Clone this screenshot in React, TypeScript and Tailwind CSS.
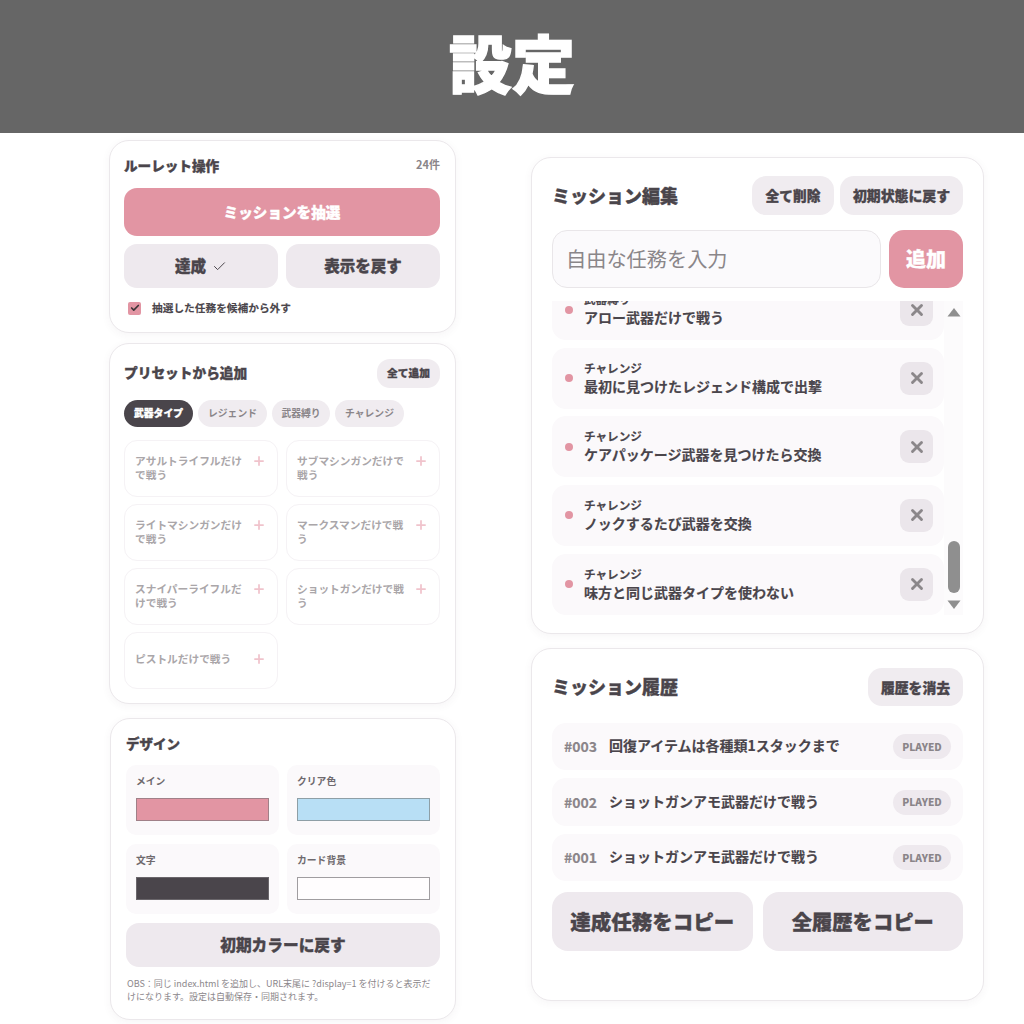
import React from "react";
import { X, Plus, Check } from "lucide-react";

const font = { fontFamily: '"Noto Sans CJK JP", "Noto Sans", sans-serif' };

const heavy = "font-black [-webkit-text-stroke:0.35px_currentColor]";
const medium = "font-bold [-webkit-text-stroke:0.15px_currentColor]";

const presets = [
  "アサルトライフルだけで戦う",
  "サブマシンガンだけで戦う",
  "ライトマシンガンだけで戦う",
  "マークスマンだけで戦う",
  "スナイパーライフルだけで戦う",
  "ショットガンだけで戦う",
  "ピストルだけで戦う",
];

const missions = [
  ["武器縛り", "アロー武器だけで戦う"],
  ["チャレンジ", "最初に見つけたレジェンド構成で出撃"],
  ["チャレンジ", "ケアパッケージ武器を見つけたら交換"],
  ["チャレンジ", "ノックするたび武器を交換"],
  ["チャレンジ", "味方と同じ武器タイプを使わない"],
];

const history = [
  ["#003", "回復アイテムは各種類1スタックまで", "h-[47px]"],
  ["#002", "ショットガンアモ武器だけで戦う", "h-[48px]"],
  ["#001", "ショットガンアモ武器だけで戦う", "h-[47px]"],
];

const colors = [
  ["メイン", "bg-[#e295a3]", "border-[#a08088]"],
  ["クリア色", "bg-[#b8dff5]", "border-[#8e9fa6]"],
  ["文字", "bg-[#4a454b]", "border-[#6a666b]"],
  ["カード背景", "bg-[#fffdfe]", "border-[#a09da0]"],
];

const cardClass =
  "rounded-[20px] border border-[#ebe8eb] bg-white shadow-[0_2px_8px_rgba(70,60,70,0.05)]";

export default function App() {
  return (
    <div style={font} className="h-[1024px] w-[1024px] overflow-hidden bg-white text-[#4a454b]">
      <header className="flex h-[133px] items-center justify-center bg-[#666666] pb-[12px]">
        <h1 className="text-[63px] font-black leading-none text-white [-webkit-text-stroke:1.4px_white]">設定</h1>
      </header>

      <main className="flex items-start">
        {/* Left column */}
        <div className="ml-[109px] mt-[7px] flex w-[347px] flex-col">
          <section className={`${cardClass} h-[193px] pl-[14px] pr-[15px]`}>
            <div className="flex h-[47px] items-center justify-between pt-[2px]">
              <h2 className={`text-[13.6px] ${heavy}`}>ルーレット操作</h2>
              <span className="-mt-[3px] text-[11px] font-bold text-[#8a8589]">24件</span>
            </div>
            <button className={`flex h-[48px] w-full items-center justify-center rounded-[13px] bg-[#e295a3] text-[14.6px] text-white ${heavy}`}>
              ミッションを抽選
            </button>
            <div className="mt-[8px] grid grid-cols-2 gap-[8px]">
              <button className={`flex h-[44px] items-center justify-center gap-[6px] rounded-[13px] bg-[#eee9ee] text-[15.5px] ${heavy}`}>
                達成 <Check size={15} strokeWidth={1.6} />
              </button>
              <button className={`h-[44px] rounded-[13px] bg-[#eee9ee] text-[15.5px] ${heavy}`}>表示を戻す</button>
            </div>
            <label className={`mt-[12px] flex items-center gap-[11px] pl-[4px] text-[10.7px] ${medium}`}>
              <span className="flex h-[13px] w-[13px] items-center justify-center rounded-[2px] bg-[#e295a3] text-[#3a3538]">
                <Check size={10} strokeWidth={4} />
              </span>
              抽選した任務を候補から外す
            </label>
          </section>

          <section className={`${cardClass} mt-[10px] h-[361px] pl-[14px] pr-[15px]`}>
            <div className="flex h-[44px] items-center justify-between pt-[14px]">
              <h2 className={`-mt-[2px] text-[13.7px] ${heavy}`}>プリセットから追加</h2>
              <button className={`flex h-[29px] w-[63px] items-center justify-center rounded-[13px] bg-[#f0ecf0] text-[10.7px] ${heavy}`}>
                全て追加
              </button>
            </div>
            <div className="mt-[12px] flex gap-[5px]">
              <span className={`flex h-[27px] w-[69px] items-center justify-center rounded-full bg-[#4a454b] text-[9.8px] text-white ${heavy}`}>
                武器タイプ
              </span>
              <span className="flex h-[27px] w-[69px] items-center justify-center rounded-full bg-[#f0ecf0] text-[9.8px] font-bold text-[#8a8589]">
                レジェンド
              </span>
              <span className="flex h-[27px] w-[58px] items-center justify-center rounded-full bg-[#f0ecf0] text-[9.8px] font-bold text-[#8a8589]">
                武器縛り
              </span>
              <span className="flex h-[27px] w-[69px] items-center justify-center rounded-full bg-[#f0ecf0] text-[9.8px] font-bold text-[#8a8589]">
                チャレンジ
              </span>
            </div>
            <div className="mt-[13px] grid grid-cols-2 gap-x-[8px] gap-y-[7px]">
              {presets.map((t, i) => (
                <div
                  key={t}
                  className={`flex h-[57px] ${i === 6 ? "pt-[19px]" : "pt-[13px]"} items-start justify-between rounded-[13px] border border-[#f5f2f5] bg-white pl-[10px] pr-[11px]`}
                >
                  <span className="w-[108px] text-[10.7px] font-bold leading-[14px] text-[#aaa6a9]">{t}</span>
                  <Plus size={14} strokeWidth={3} className="text-[#f0c3cc]" />
                </div>
              ))}
            </div>
          </section>

          <section className={`${cardClass} ml-px mt-[14px] h-[302px] px-[15px]`}>
            <h2 className={`pt-[15px] text-[13.5px] leading-[18px] ${heavy}`}>デザイン</h2>
            <div className="mt-[13px] grid grid-cols-2 gap-x-[8px] gap-y-[9px]">
              {colors.map(([label, bg, border]) => (
                <div key={label} className="h-[70px] rounded-[10px] bg-[#fbf9fb] px-[10px] pt-[9px]">
                  <div className="text-[9.8px] font-bold leading-[14px] text-[#6f6a6e]">{label}</div>
                  <div className={`mt-[10px] h-[23px] border-[1.5px] ${bg} ${border}`} />
                </div>
              ))}
            </div>
            <button className={`mt-[9px] h-[44px] w-full rounded-[13px] bg-[#eee9ee] text-[15.7px] ${heavy}`}>
              初期カラーに戻す
            </button>
            <p className="mt-[10px] pl-[1px] pr-[8px] text-[9px] leading-[13px] text-[#8c878b]">
              OBS：同じ index.html を追加し、URL末尾に ?display=1 を付けると表示だけになります。設定は自動保存・同期されます。
            </p>
          </section>
        </div>

        {/* Right column */}
        <div className="ml-[75px] mt-[24px] flex w-[453px] flex-col">
          <section className={`${cardClass} h-[477px] px-[20px] pt-[18px]`}>
            <div className="flex h-[39px] items-center justify-between">
              <h2 className={`text-[18px] ${heavy}`}>ミッション編集</h2>
              <div className="flex gap-[6px]">
                <button className={`h-[39px] w-[82px] rounded-[14px] bg-[#f0ecf0] text-[13.7px] ${heavy}`}>全て削除</button>
                <button className={`h-[39px] w-[123px] rounded-[14px] bg-[#f0ecf0] text-[13.9px] ${heavy}`}>初期状態に戻す</button>
              </div>
            </div>
            <div className="mt-[15px] flex gap-[8px]">
              <div className="flex h-[58px] w-[329px] items-center rounded-[15px] border border-[#e9e6e9] bg-[#fbfafc] pl-[13px] text-[20.2px] text-[#8a8689]">
                自由な任務を入力
              </div>
              <button className={`h-[58px] w-[74px] rounded-[15px] bg-[#e295a3] text-[20px] text-white ${heavy}`}>追加</button>
            </div>
            <div className="mt-[13px] flex h-[314px] overflow-hidden">
              <div className="-mt-[22px] flex w-[392px] shrink-0 flex-col gap-[7.67px]">
                {missions.map(([cat, title]) => (
                  <div key={title} className="flex h-[61px] shrink-0 items-center rounded-[14px] bg-[#fbf9fb] pl-[13px] pr-[11px]">
                    <span className="h-[8px] w-[8px] shrink-0 rounded-full bg-[#e295a3]" />
                    <div className="-mt-[1px] ml-[11px] min-w-0 flex-1">
                      <div className={`text-[11.6px] leading-[16px] ${medium}`}>{cat}</div>
                      <div className={`text-[14px] leading-[20px] ${medium}`}>{title}</div>
                    </div>
                    <span className="flex h-[33px] w-[33px] items-center justify-center rounded-[9px] bg-[#ebe6eb] text-[#8b878a]">
                      <X size={18} strokeWidth={3.8} />
                    </span>
                  </div>
                ))}
              </div>
              <div className="flex w-[19px] flex-col items-center bg-[#fcfbfc] pb-[5px] pt-[6px]">
                <svg width="14" height="10" viewBox="0 0 14 10" className="shrink-0">
                  <path d="M7 1 L13.5 9.5 L0.5 9.5 Z" fill="#8f8f8f" />
                </svg>
                <div className="mt-auto h-[52px] w-[12px] rounded-full bg-[#8f8f8f]" />
                <svg width="14" height="10" viewBox="0 0 14 10" className="mt-[7px] shrink-0">
                  <path d="M0.5 0.5 L13.5 0.5 L7 9 Z" fill="#8f8f8f" />
                </svg>
              </div>
            </div>
          </section>

          <section className={`${cardClass} mt-[14px] h-[353px] px-[20px] pt-[19px]`}>
            <div className="flex h-[38px] items-center justify-between">
              <h2 className={`-mt-[1px] text-[18px] ${heavy}`}>ミッション履歴</h2>
              <button className={`h-[38px] w-[95px] rounded-[14px] bg-[#f0ecf0] text-[13.8px] ${heavy}`}>履歴を消去</button>
            </div>
            <div className="mt-[17px] flex flex-col gap-[8px]">
              {history.map(([n, t, h]) => (
                <div key={n} className={`flex ${h} items-center rounded-[14px] bg-[#fbf9fb] pl-[12px] pr-[12px]`}>
                  <span className={`w-[45px] text-[14px] text-[#8a8589] ${medium}`}>{n}</span>
                  <span className={`-mt-[2px] flex-1 text-[14px] ${medium}`}>{t}</span>
                  <span className="flex h-[25px] w-[58px] items-center justify-center rounded-full bg-[#eee9ee] text-[10.2px] font-black text-[#8a8589]">
                    PLAYED
                  </span>
                </div>
              ))}
            </div>
            <div className="mt-[11px] grid grid-cols-2 gap-[10px]">
              <button className={`h-[59px] rounded-[16px] bg-[#eee9ee] text-[20.5px] ${heavy}`}>達成任務をコピー</button>
              <button className={`h-[59px] rounded-[16px] bg-[#eee9ee] text-[20.3px] ${heavy}`}>全履歴をコピー</button>
            </div>
          </section>
        </div>
      </main>
    </div>
  );
}
